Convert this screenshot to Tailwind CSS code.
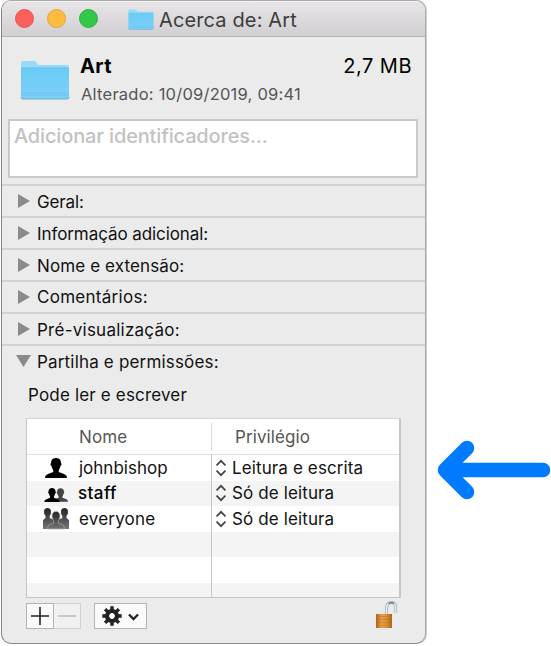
<!DOCTYPE html>
<html lang="pt">

<head>
    <meta charset="UTF-8">
    <meta name="viewport" content="width=device-width, initial-scale=1.0">
    <title>Acerca de: Art</title>
    <script src="https://cdn.jsdelivr.net/npm/@tailwindcss/browser@4"></script>
</head>

<body class="bg-white font-['Inter','Liberation_Sans',sans-serif] text-[17px] leading-[20px] text-[#111] whitespace-nowrap overflow-hidden">
    <svg width="0" height="0" class="absolute">
        <defs>
            <linearGradient id="folderFill" x1="0" y1="0" x2="0" y2="1">
                <stop offset="0" stop-color="#6bcbf6" />
                <stop offset="1" stop-color="#7dd0f8" />
            </linearGradient>
            <linearGradient id="groupFill" x1="0" y1="0" x2="0" y2="1">
                <stop offset="0" stop-color="#222" />
                <stop offset="1" stop-color="#777" />
            </linearGradient>
            <linearGradient id="lockFill" x1="0" y1="0" x2="1" y2="0">
                <stop offset="0" stop-color="#a9641c" />
                <stop offset=".35" stop-color="#eaa046" />
                <stop offset=".65" stop-color="#dc8f35" />
                <stop offset="1" stop-color="#a9641c" />
            </linearGradient>
            <symbol id="folder" viewBox="0 0 50 40">
                <path d="M1 3Q1 1 3 1H14Q16 1 17 3L18 5H47Q49 5 49 7V37Q49 39 47 39H3Q1 39 1 37Z" fill="#97dbfa" />
                <path d="M1 8H49V37Q49 39 47 39H3Q1 39 1 37Z" fill="url(#folderFill)" />
                <path d="M1 7.7H49" stroke="#61bce9" stroke-width=".7" />
                <path d="M1 33H49M1 35.2H49" stroke="#68bde7" stroke-width=".6" />
                <path d="M1 37Q1 39 3 39H47Q49 39 49 37" fill="none" stroke="#70abc7" stroke-width="1" />
            </symbol>
            <symbol id="right" viewBox="0 0 12 14">
                <path d="M0 0L12 7L0 14Z" fill="#8a8a8a" />
            </symbol>
            <symbol id="updown" viewBox="0 0 10 18">
                <path d="M.5 6.500L5 1.800L9.500 6.500M.5 11.500L5 16.200L9.500 11.500" fill="none" stroke="#444" stroke-width="1.800" />
            </symbol>
            <symbol id="person" viewBox="0 0 22 20">
                <path d="M6 5C6 1.700 8 0 11 0S16 1.700 16 5C17 6 16.400 7.600 15.500 8C15 10 14.400 11 13.800 12V14L19 16Q22 17 22 20H0Q0 17 3 16L8.200 14V12C7.600 11 7 10 6.500 8C5.600 7.600 5 6 6 5Z" />
            </symbol>
        </defs>
    </svg>

    <div class="flex h-[646px]">
        <div class="w-[425px] h-[644px] ml-px shrink-0 flex flex-col bg-[#ebebeb] border border-l-[#858585] border-t-[#a9a8a9] border-r-[#aaa] border-b-[#8b8b8b] rounded-[10px] shadow-[1px_0_0_#cfcfcf] overflow-hidden">
            <div class="h-[36px] shrink-0 flex items-center pl-[13px] bg-linear-to-b from-[#e8e6e8] to-[#d1cfd1] border-b border-[#b5b3b5] shadow-[inset_0_1px_0_#f3f2f3]">
                <div class="flex gap-[13px]">
                    <div class="size-[19px] rounded-full bg-[#fc605c] border border-[#e5544f]"></div>
                    <div class="size-[19px] rounded-full bg-[#fdbc40] border border-[#e1a43b]"></div>
                    <div class="size-[19px] rounded-full bg-[#34c84a] border border-[#2dae3f]"></div>
                </div>
                <svg class="w-[26px] h-[21px] ml-[30px] mt-px"><use href="#folder" /></svg>
                <h1 class="ml-[5px] mt-[2px] text-[20px] leading-[24px] tracking-[0.13px] text-[#3d3c3d]">Acerca de: Art</h1>
            </div>

            <div class="h-[82px] shrink-0 flex pl-[18px] pr-[13px] pt-[16px]">
                <svg class="w-[50px] h-[40px] mt-[7px]"><use href="#folder" /></svg>
                <div class="ml-[10px] flex-1">
                    <div class="flex justify-between text-[20px] leading-[26px] text-black">
                        <b class="font-bold tracking-[0.400px]">Art</b>
                        <span class="tracking-[0.500px]">2,7 MB</span>
                    </div>
                    <p class="mt-[4px] ml-px text-[16.500px] leading-[22px] tracking-[0.230px] text-[#555]">Alterado: 10/09/2019, 09:41</p>
                </div>
            </div>

            <div class="h-[59px] shrink-0 mx-[6px] mr-[7px] bg-white border-2 border-[#c9c9c9] pl-[4px] pt-[3px] text-[20px] leading-[24px] tracking-[-0.150px] font-medium text-[#c2c2c2]">Adicionar identificadores...</div>

            <div class="mt-[6px] shrink-0">
                <div class="h-[32px] flex items-center pl-[16px] gap-[7px] border-t-2 border-[#d2d2d2]"><svg class="w-[12px] h-[14px]"><use href="#right" /></svg><span class="pt-px tracking-[-0.150px]">Geral:</span></div>
                <div class="h-[32px] flex items-center pl-[16px] gap-[7px] border-t-2 border-[#d2d2d2]"><svg class="w-[12px] h-[14px]"><use href="#right" /></svg><span class="pt-px tracking-[-0.080px]">Informação adicional:</span></div>
                <div class="h-[32px] flex items-center pl-[16px] gap-[7px] border-t-2 border-[#d2d2d2]"><svg class="w-[12px] h-[14px]"><use href="#right" /></svg><span class="pt-px tracking-[0.120px]">Nome e extensão:</span></div>
                <div class="h-[32px] flex items-center pl-[16px] gap-[7px] border-t-2 border-[#d2d2d2]"><svg class="w-[12px] h-[14px]"><use href="#right" /></svg><span class="pb-px tracking-[0.280px]">Comentários:</span></div>
                <div class="h-[32px] flex items-center pl-[16px] gap-[7px] border-t-2 border-[#d2d2d2]"><svg class="w-[12px] h-[14px]"><use href="#right" /></svg><span class="pt-[2px] tracking-[0.250px]">Pré-visualização:</span></div>
                <div class="h-[32px] flex items-center pl-[14px] gap-[6px] border-t-2 border-[#d2d2d2]">
                    <svg class="w-[15px] h-[12px]" viewBox="0 0 15 12"><path d="M0 0H15L7.500 12Z" fill="#8a8a8a" /></svg>
                    <span class="pt-px tracking-[0.180px]">Partilha e permissões:</span>
                </div>
            </div>

            <p class="mt-[9px] pl-[26px] h-[23px] shrink-0 tracking-[0.170px]">Pode ler e escrever</p>

            <div class="mt-[10px] ml-[24px] w-[375px] h-[180px] shrink-0 flex flex-col bg-white border border-[#c6c6c6] border-t-[#d4d4d4] border-r-2 overflow-hidden">
                <div class="h-[36px] shrink-0 flex items-center border-b border-[#dedede] tracking-[0.100px] text-[#555]">
                    <span class="w-[184px] pl-[52px]">Nome</span>
                    <span class="h-[28px] w-px bg-[#dadada]"></span>
                    <span class="pl-[23px]">Privilégio</span>
                </div>
                <div class="h-[25.500px] shrink-0 flex">
                    <div class="w-[185px] flex items-center border-r border-[#c6c6c6]">
                        <svg class="ml-[18px] w-[22px] h-[20px]"><use href="#person" /></svg>
                        <span class="ml-[12px]">johnbishop</span>
                    </div>
                    <div class="flex items-center pl-[4px] gap-[6px] tracking-[0.120px]"><svg class="w-[10px] h-[18px]"><use href="#updown" /></svg>Leitura e escrita</div>
                </div>
                <div class="h-[25.500px] shrink-0 flex bg-[#f4f4f4]">
                    <div class="w-[185px] flex items-center border-r border-[#c6c6c6]">
                        <svg class="ml-[17px] mt-[3px] w-[24px] h-[14px]" viewBox="0 0 24 14">
                            <use href="#person" x="9" y="0" width="15" height="14" fill="#444" />
                            <use href="#person" x="0" y="0" width="16" height="14" />
                        </svg>
                        <span class="ml-[10px] text-black font-medium tracking-[0.400px]">staff</span>
                    </div>
                    <div class="flex items-center pl-[4px] gap-[6px] tracking-[0.120px]"><svg class="w-[10px] h-[18px]"><use href="#updown" /></svg>Só de leitura</div>
                </div>
                <div class="h-[25.500px] shrink-0 flex">
                    <div class="w-[185px] flex items-center border-r border-[#c6c6c6]">
                        <svg class="ml-[16px] w-[26px] h-[22px]" viewBox="0 0 26 22">
                            <path d="M1 4C1 1.400 2.200 0 4.500 0S8 1.400 8 4Q8.300 6 6.700 8V10L11 12V21H0V12L2.500 10V8Q.7 6 1 4ZM18 4C18 1.400 19.200 0 21.500 0S25 1.400 25 4Q25.300 6 23.500 8V10L26 12V21H15V12L19.300 10V8Q17.700 6 18 4Z" fill="url(#groupFill)" />
                            <path d="M9 8C9 5 10.500 3.500 13 3.500S17 5 17 8Q17 11 15.200 13V15L20 17Q21.500 18 21.500 21H4.500Q4.500 18 6 17L10.800 15V13Q9 11 9 8Z" fill="url(#groupFill)" stroke="#aaa" stroke-width=".7" />
                        </svg>
                        <span class="ml-[10px] tracking-[0.200px]">everyone</span>
                    </div>
                    <div class="flex items-center pl-[4px] gap-[6px] tracking-[0.120px]"><svg class="w-[10px] h-[18px]"><use href="#updown" /></svg>Só de leitura</div>
                </div>
                <div class="h-[25.500px] shrink-0 bg-[#f4f4f4]"><div class="w-[185px] h-full border-r border-[#c6c6c6]"></div></div>
                <div class="h-[25.500px] shrink-0"><div class="w-[185px] h-full border-r border-[#c6c6c6]"></div></div>
                <div class="flex-1 bg-[#f4f4f4]"><div class="w-[185px] h-full border-r border-[#c6c6c6]"></div></div>
            </div>

            <div class="flex items-start pl-[24px] pt-[5px]">
                <button class="w-[28px] h-[26px] border border-[#b5b5b5] bg-[#fafafa] flex items-center justify-center">
                    <svg class="w-[18px] h-[18px]" viewBox="0 0 18 18"><path d="M0 9H18M9 0V18" stroke="#222" stroke-width="1.600" /></svg>
                </button>
                <button class="w-[27px] h-[26px] border border-l-0 border-[#d0d0d0] bg-[#f1f1f1] flex items-center justify-center">
                    <svg class="w-[18px] h-[18px]" viewBox="0 0 18 18"><path d="M0 9H18" stroke="#bbb" stroke-width="1.500" /></svg>
                </button>
                <button class="ml-[13px] w-[53px] h-[26px] border border-[#b5b5b5] bg-[#fafafa] flex items-center pl-[7px]">
                    <svg class="w-[20px] h-[20px]" viewBox="-10 -10 20 20">
                        <g stroke="#222" stroke-width="3.400">
                            <path d="M0 -9.700V9.700M-9.700 0H9.700M-6.900 -6.900L6.900 6.900M6.900 -6.900L-6.900 6.900" />
                        </g>
                        <circle r="5" fill="#fafafa" stroke="#222" stroke-width="4.200" />
                    </svg>
                    <svg class="ml-[6px] mt-px w-[11px] h-[8px]" viewBox="0 0 11 8"><path d="M1 1.500L5.500 6L10 1.500" fill="none" stroke="#222" stroke-width="2.300" /></svg>
                </button>
                <svg class="ml-[227px] -mt-[2px] w-[24px] h-[28px]" viewBox="0 0 24 28">
                    <path d="M12.500 14V7Q13 1.500 17.500 1.500T21.500 7V12" fill="none" stroke="#a3b0b9" stroke-width="3.200" />
                    <path d="M12.500 14V7Q13 1.500 17.500 1.500T21.500 7V12" fill="none" stroke="#e2eaee" stroke-width="1.700" />
                    <path d="M14.500 3Q17 .3 20 2.500" fill="none" stroke="#5d6d7d" stroke-width="1.200" />
                    <rect x="2" y="13" width="16" height="14" fill="url(#lockFill)" />
                    <path d="M2 15.500H18M2 18.500H18M2 21.500H18M2 24.500H18" stroke="#b87426" stroke-width=".5" />
                </svg>
            </div>
        </div>

        <svg class="w-[125px] h-[64px] mt-[438px] shrink-0" viewBox="426 438 125 64">
            <path d="M467 448L445 470L467 492M447 470H543" fill="none" stroke="#007aff" stroke-width="14.500" stroke-linecap="round" stroke-linejoin="round" />
        </svg>
    </div>
</body>

</html>
